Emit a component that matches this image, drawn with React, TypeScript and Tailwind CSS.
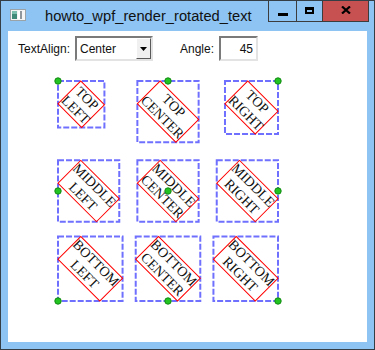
import React from "react";

// Times New Roman advance widths (1/1000 em), Liberation Serif matches them
const WIDTHS: Record<string, number> = {
  TOP: 1889,
  MIDDLE: 3888,
  BOTTOM: 4222,
  LEFT: 2389,
  CENTER: 3889,
  RIGHT: 3055,
};

const FONT_SIZE = 14;
const LINE_H = 16.1;
const ASCENT = 12.5;
const R2 = Math.SQRT2;

const ROWS = ["TOP", "MIDDLE", "BOTTOM"];
const COLS = ["LEFT", "CENTER", "RIGHT"];

function RotatedLabel({ row, col }: { row: number; col: number }) {
  const lines = [ROWS[row], COLS[col]];
  const w = Math.max(...lines.map((l) => (WIDTHS[l] * FONT_SIZE) / 1000));
  const h = LINE_H * lines.length;
  const size = (w + h) / R2;
  const ax = 50 + 110 * col;
  const ay = 15 + 110 * row;
  const bx = ax - size * (col / 2);
  const by = ay - size * (row / 2);

  return (
    <g>
      <rect
        x={bx}
        y={by}
        width={size}
        height={size}
        fill="none"
        stroke="#7070ff"
        strokeWidth={2}
        strokeDasharray="6 2"
      />
      <g transform={`translate(${bx + h / R2} ${by}) rotate(45)`}>
        <rect x={0} y={0} width={w} height={h} fill="none" stroke="#ff0000" strokeWidth={1} />
        {lines.map((l, i) => (
          <text
            key={l}
            x={w / 2}
            y={ASCENT + i * LINE_H}
            textAnchor="middle"
            fontFamily="'Liberation Serif', 'Times New Roman', serif"
            fontSize={FONT_SIZE}
            fill="#111"
          >
            {l}
          </text>
        ))}
      </g>
      <circle cx={ax} cy={ay} r={3.2} fill="#22c422" stroke="#138a13" strokeWidth={1} />
    </g>
  );
}

function AppIcon() {
  return (
    <svg width="16" height="12" viewBox="0 0 16 12">
      <rect x="0.5" y="0.5" width="15" height="11" fill="#f4f4f4" stroke="#9aa3a8" />
      <rect x="2" y="2" width="5" height="8" fill="#3f8a78" />
      <rect x="2" y="2" width="5" height="3" fill="#7dbfae" />
      <rect x="8" y="2" width="2" height="8" fill="#ffffff" />
      <rect x="10" y="2" width="2" height="8" fill="#8f979c" />
    </svg>
  );
}

export default function App() {
  return (
    <div
      className="w-[375px] h-[350px] bg-[#8dc4f4] border border-[#353d45] flex flex-col"
      style={{ fontFamily: "'Liberation Sans', Arial, sans-serif" }}
    >
      {/* title bar */}
      <div className="h-[30px] flex items-start shrink-0">
        <div className="ml-[9px] mt-[8px]">
          <AppIcon />
        </div>
        <div className="ml-[19px] flex-1 leading-[30px] text-[14.7px] text-[#111]">
          howto_wpf_render_rotated_text
        </div>
        <div className="flex h-[21px] mr-[5px]">
          <div className="w-[28px] h-full border-l border-b border-[#3c3c3c] flex items-center justify-center">
            <div className="w-[10px] h-[3px] bg-black mt-[6px]" />
          </div>
          <div className="w-[26px] h-full border-l border-b border-[#3c3c3c] flex items-center justify-center">
            <div className="w-[9px] h-[7px] border-2 border-t-[3px] border-black mb-[2px]" />
          </div>
          <div className="w-[47px] h-full border-l border-r border-b border-[#3c3c3c] bg-[#c75050] flex items-center justify-center">
            <svg width="10" height="8" viewBox="0 0 10 8" className="mb-[2px]">
              <path d="M1 0.5 L9 7.5 M9 0.5 L1 7.5" stroke="#000" strokeWidth="2.2" />
            </svg>
          </div>
        </div>
      </div>

      {/* client area */}
      <div className="mx-[7px] mb-[7px] flex-1 bg-white flex flex-col">
        <div className="flex items-center h-[25px] mt-[5px] pl-[10px] text-[12px] text-[#111]">
          <span className="w-[57px]">TextAlign:</span>
          <div className="w-[78px] h-[25px] border-2 border-t-[#7a7a7a] border-l-[#7a7a7a] border-b-[#e3e3e3] border-r-[#e3e3e3] bg-white flex items-center">
            <span className="flex-1 pl-[3px]">Center</span>
            <div className="w-[15px] h-[21px] bg-[#f0f0f0] border border-t-white border-l-white border-b-[#5a5a5a] border-r-[#5a5a5a] flex items-center justify-center">
              <svg width="7" height="4" viewBox="0 0 7 4">
                <path d="M0 0 H7 L3.5 4 Z" fill="#000" />
              </svg>
            </div>
          </div>
          <span className="ml-[27px] w-[39px]">Angle:</span>
          <div className="w-[39px] h-[25px] border-2 border-t-[#7a7a7a] border-l-[#7a7a7a] border-b-[#e3e3e3] border-r-[#e3e3e3] bg-white flex items-center justify-end pr-[3px]">
            45
          </div>
        </div>

        <svg width="359" height="276" className="mt-[5px] block">
          {ROWS.map((_, r) =>
            COLS.map((__, c) => <RotatedLabel key={`${r}-${c}`} row={r} col={c} />)
          )}
        </svg>
      </div>
    </div>
  );
}
